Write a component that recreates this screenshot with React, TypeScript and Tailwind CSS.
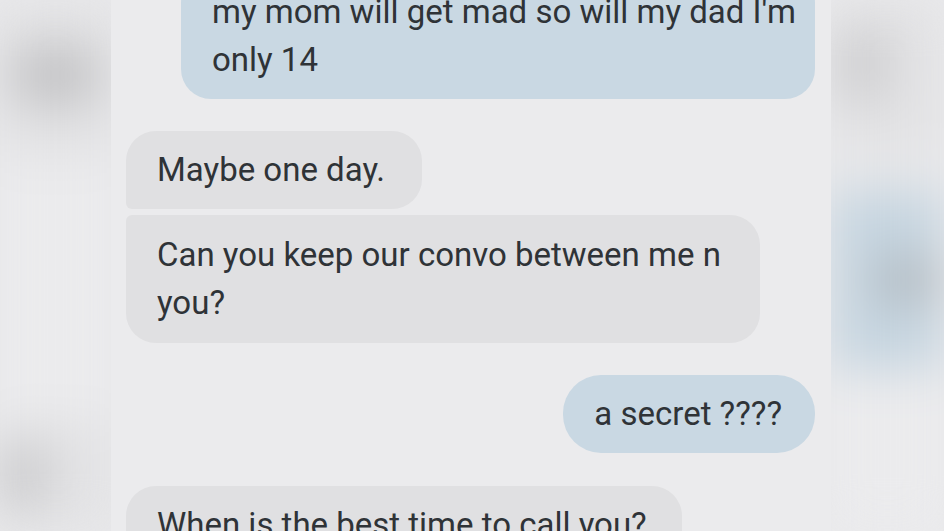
const received = "bg-[#e0e0e2] text-[#2f3337]";
const sent = "bg-[#c9d8e3] text-[#2f3337]";

function Bubble({ side, className, children }: { side: "in" | "out"; className?: string; children: React.ReactNode }) {
    return (
        <div className={`flex ${side === "out" ? "justify-end" : "justify-start"}`}>
            <div
                className={`max-w-[634px] pl-[31px] text-[33px] leading-[48px] ${
                    side === "out" ? sent : received
                } ${className ?? ""}`}
            >
                {children}
            </div>
        </div>
    );
}

function LeftBlur() {
    return (
        <div className="w-[111px] shrink-0 overflow-hidden bg-[#e9e9eb]">
            <div className="flex flex-col blur-xl">
                <div className="h-[30px] bg-[#e4e4e6]" />
                <div className="flex h-[90px] bg-[#dcdcde] pl-[10px] py-[20px]">
                    <div className="w-[90px] rounded-full bg-[#c2c2c4]" />
                </div>
                <div className="h-[40px] bg-[#e3e3e5]" />
                <div className="h-[260px] bg-[#ebebed]" />
                <div className="flex h-[111px] bg-[#e2e2e4] py-[20px]">
                    <div className="w-[45px] rounded-full bg-[#c8c8ca]" />
                </div>
            </div>
        </div>
    );
}

function RightBlur() {
    return (
        <div className="flex-1 overflow-hidden bg-[#eaeaec]">
            <div className="flex flex-col blur-xl">
                <div className="flex h-[150px] bg-[#e2e2e4] pt-[25px] pb-[45px]">
                    <div className="w-[60px] rounded-full bg-[#cfcfd1]" />
                </div>
                <div className="h-[40px] bg-[#e8e8ea]" />
                <div className="flex h-[180px] flex-col bg-[#c6d5e0] pl-[40px] py-[65px]">
                    <div className="h-full rounded-full bg-[#b3bcc3]" />
                </div>
                <div className="h-[161px] bg-[#ebebed]" />
            </div>
        </div>
    );
}

export default function App() {
    return (
        <div
            className="flex h-[531px] w-[944px] overflow-hidden bg-[#ebebed]"
            style={{ fontFamily: "Roboto, 'Noto Sans', sans-serif" }}
        >
            <LeftBlur />
            <main className="flex w-[720px] shrink-0 flex-col bg-[#ebebed] pl-[15px] pr-[16px]">
                <div className="mt-[-27px]">
                    <Bubble side="out" className="w-[634px] whitespace-nowrap rounded-[30px] py-[15px] pr-[20px]">
                        my mom will get mad so will my dad I'm
                        <br />
                        only 14
                    </Bubble>
                </div>
                <div className="mt-[32px] flex flex-col gap-[6px]">
                    <Bubble side="in" className="rounded-[30px] rounded-bl-[6px] py-[15px] pr-[37px]">
                        Maybe one day.
                    </Bubble>
                    <Bubble side="in" className="rounded-[30px] rounded-tl-[6px] py-[16px] pr-[35px]">
                        Can you keep our convo between me n you?
                    </Bubble>
                </div>
                <div className="mt-[32px]">
                    <Bubble side="out" className="rounded-[38px] py-[15px] pr-[33px]">
                        a secret ????
                    </Bubble>
                </div>
                <div className="mt-[33px]">
                    <Bubble side="in" className="rounded-[30px] py-[15px] pr-[35px]">
                        When is the best time to call you?
                    </Bubble>
                </div>
            </main>
            <RightBlur />
        </div>
    );
}
